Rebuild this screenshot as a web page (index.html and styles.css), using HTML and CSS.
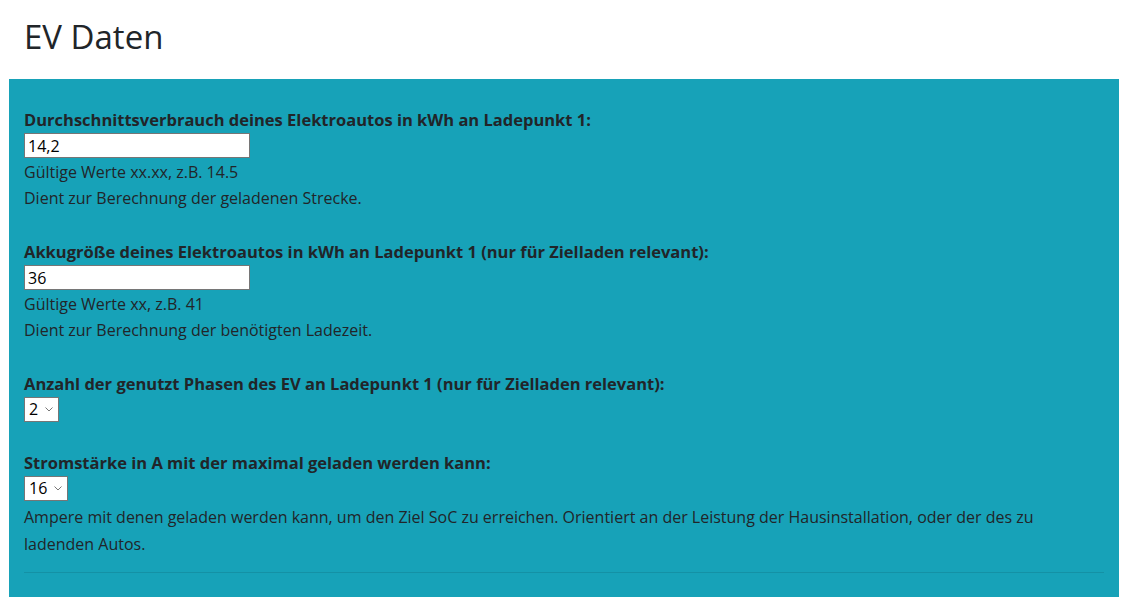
FILE: index.html
```html
<!DOCTYPE html>
<html lang="de">
<head>
<meta charset="utf-8">
<title>EV Daten</title>
<link rel="stylesheet" href="styles.css">
</head>
<body>
<div class="container">
  <h1 class="title">EV Daten</h1>
  <div class="panel">
    <div class="field">
      <label class="label" for="verbrauch">Durchschnittsverbrauch deines Elektroautos in kWh an Ladepunkt 1:</label>
      <input class="text-input" id="verbrauch" type="text" value="14,2">
      <div class="help">Gültige Werte xx.xx, z.B. 14.5</div>
      <div class="help">Dient zur Berechnung der geladenen Strecke.</div>
    </div>
    <div class="field">
      <label class="label" for="akku">Akkugröße deines Elektroautos in kWh an Ladepunkt 1 (nur für Zielladen relevant):</label>
      <input class="text-input" id="akku" type="text" value="36">
      <div class="help">Gültige Werte xx, z.B. 41</div>
      <div class="help">Dient zur Berechnung der benötigten Ladezeit.</div>
    </div>
    <div class="field">
      <label class="label" for="phasen">Anzahl der genutzt Phasen des EV an Ladepunkt 1 (nur für Zielladen relevant):</label>
      <select class="select s-short" id="phasen">
        <option>1</option>
        <option selected>2</option>
        <option>3</option>
      </select>
    </div>
    <div class="field last">
      <label class="label" for="strom">Stromstärke in A mit der maximal geladen werden kann:</label>
      <select class="select s-long" id="strom">
        <option>6</option>
        <option>10</option>
        <option selected>16</option>
        <option>32</option>
      </select>
      <div class="help wide">Ampere mit denen geladen werden kann, um den Ziel SoC zu erreichen. Orientiert an der Leistung der Hausinstallation, oder der des zu ladenden Autos.</div>
    </div>
    <hr class="divider">
  </div>
</div>
</body>
</html>
```
FILE: styles.css
```css
html, body {
  margin: 0;
  padding: 0;
  background: #ffffff;
}
body {
  font-family: "Open Sans", "Noto Sans", "Liberation Sans", sans-serif;
  color: #212529;
  font-size: 16px;
}
.container {
  padding: 0 8px 0 9px;
}
.title {
  margin: 0;
  padding: 15px 15px 0;
  height: 79px;
  box-sizing: border-box;
  font-weight: 400;
  font-size: 33px;
  line-height: 44px;
}
.panel {
  background: #17a2b8;
  padding: 29px 15px 1px;
  min-height: 540px;
  box-sizing: border-box;
}
.field {
  margin-bottom: 29px;
}
.field.last {
  margin-bottom: 0;
}
.label {
  display: block;
  font-weight: 700;
  font-size: 16.5px;
  line-height: 24px;
  height: 25px;
}
.text-input {
  display: block;
  box-sizing: border-box;
  width: 226px;
  height: 25px;
  margin: 0 0 1px;
  padding: 0 3px;
  border: 1px solid #767676;
  background: #fff;
  font: inherit;
  font-size: 16px;
  color: #000;
}
.help {
  line-height: 26px;
}
.select {
  display: block;
  box-sizing: border-box;
  height: 25px;
  min-height: 25px;
  margin-bottom: 1px;
  padding: 0 0 0 4px;
  border: 1px solid #767676;
  border-radius: 0;
  background-color: #fff;
  background-image: url("data:image/svg+xml;utf8,<svg xmlns='http://www.w3.org/2000/svg' width='8' height='5' viewBox='0 0 8 5'><path d='M0.5 0.5l3.5 3.5 3.5-3.5' fill='none' stroke='%23777' stroke-width='1'/></svg>");
  background-repeat: no-repeat;
  background-position: right 5px center;
  -webkit-appearance: none;
  appearance: none;
  font: inherit;
  font-size: 16px;
  line-height: 23px;
  color: #000;
}
.s-short {
  width: 35px;
}
.s-long {
  width: 44px;
  margin-bottom: 3px;
}
.help.wide {
  line-height: 27px;
}
.divider {
  margin: 14px 0 0;
  border: 0;
  border-top: 1px solid rgba(0, 0, 0, 0.1);
}
```
